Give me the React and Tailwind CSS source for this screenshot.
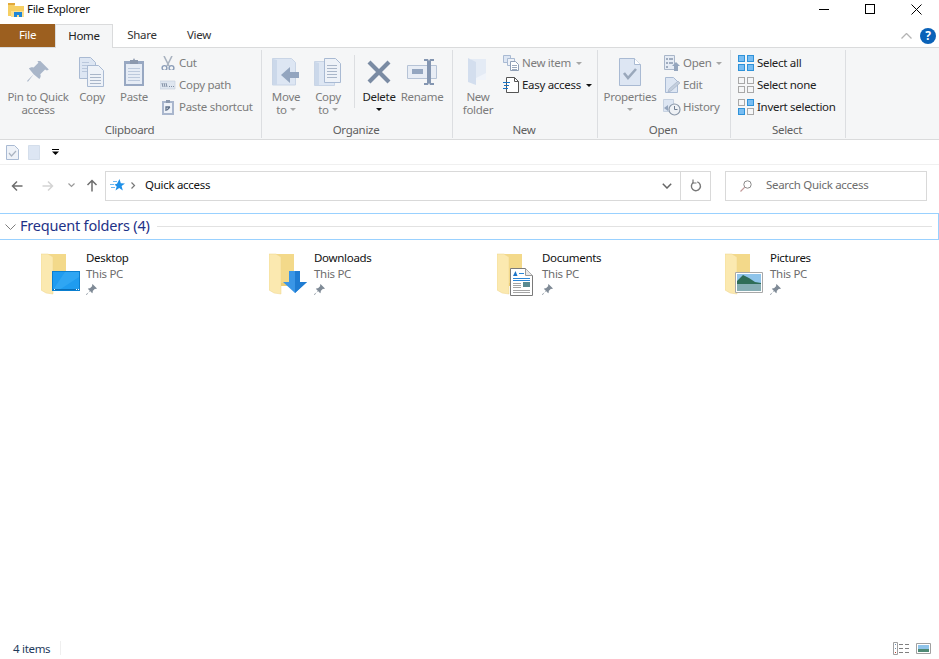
import React from "react"

const FOLDERS = [
  { name: "Desktop", overlay: "desktop" },
  { name: "Downloads", overlay: "downloads" },
  { name: "Documents", overlay: "documents" },
  { name: "Pictures", overlay: "pictures" },
]

const EDGE = "#a9bad3"
const PALE = "#dde6f3"

function Svg({ w, h = w, children, className = "" }) {
  return (
    <svg width={w} height={h} viewBox={`0 0 ${w} ${h}`} className={`block shrink-0 ${className}`}>
      {children}
    </svg>
  )
}

// thin horizontal rules inside icons, kept on whole pixels
function Rule({ d, color }) {
  return <path d={d} stroke={color} fill="none" shapeRendering="crispEdges" />
}

function AppIcon() {
  return (
    <Svg w={16} h={14}>
      <path d="M0 1h6l1 2h9v10H0z" fill="#f6cf63" />
      <path d="M0 0h7v2H0z" fill="#e2a93b" />
      <path d="M3 8h13v6H3z" fill="#fbe08f" />
      <path d="M6 9h8v5h-3v-2H9v2H6z" fill="#1f86d8" />
    </Svg>
  )
}

function WindowControls() {
  return (
    <div className="flex items-center ml-auto">
      <div className="w-[46px] h-[20px] flex items-center justify-center">
        <div className="w-[10px] h-px bg-black" />
      </div>
      <div className="w-[46px] h-[20px] flex items-center justify-center">
        <div className="w-[10px] h-[10px] border border-black" />
      </div>
      <div className="w-[46px] h-[20px] flex items-center justify-center">
        <Svg w={11}>
          <path d="M.5.5l10 10M10.5.5l-10 10" stroke="#000" strokeWidth="1" />
        </Svg>
      </div>
    </div>
  )
}

function PinIcon() {
  return (
    <Svg w={24}>
      <path d="M14 1l9 9-2 1-2-1-5 5c1 2 0 4-1 5L7 15l-6 8-1-1 7-7-5-6c1-1 3-2 5-1l5-5-1-2z" fill="#a9b6c9" transform="translate(1 0) scale(.95)" />
    </Svg>
  )
}

function CopyIcon() {
  return (
    <Svg w={26} h={30}>
      <path d="M.5.5h11l5 5v16H.5z" fill={PALE} stroke={EDGE} />
      <Rule d="M3 5h7M3 8h10M3 11h10M3 14h10" color="#b9c7dc" />
      <path d="M8.500 8.500h11l5 5v16h-16z" fill="#eef2f8" stroke={EDGE} />
      <Rule d="M11 17h11M11 20h11M11 23h11M11 26h11" color="#a9b6c9" />
    </Svg>
  )
}

function PasteIcon() {
  return (
    <Svg w={22} h={28}>
      <path d="M1 3h20v25H1z" fill="#98a8c2" />
      <path d="M3 6h16v20H3z" fill="#e6ecf5" />
      <Rule d="M5 10h12M5 13h12M5 16h12M5 19h12M5 22h12" color="#bcc9dc" />
      <path d="M7 2h3l1-2 1 2h3v4H7z" fill="#8c99ae" />
    </Svg>
  )
}

function ScissorsIcon() {
  return (
    <Svg w={14}>
      <path d="M3 0l5 10M11 0L6 10" stroke="#a9b3c0" strokeWidth="1.6" fill="none" />
      <circle cx="3.500" cy="12" r="2.400" fill="none" stroke="#8b9db8" strokeWidth="1.4" />
      <circle cx="10.500" cy="12" r="2.400" fill="none" stroke="#8b9db8" strokeWidth="1.4" />
    </Svg>
  )
}

function CopyPathIcon() {
  return (
    <Svg w={16} h={10}>
      <path d="M0 1h15v8H0z" fill="#dfe6f0" stroke="#c2cddb" strokeWidth=".6" />
      <path d="M2 3l1 4M4 3l1 4M6 3l1 4M9 6.500h1M11 6.500h1M13 6.500h1" stroke="#7f8da3" />
    </Svg>
  )
}

function PasteShortcutIcon() {
  return (
    <Svg w={14} h={16}>
      <path d="M1 2h12v14H1z" fill="#a9b6cd" />
      <path d="M3 4h8v10H3z" fill="#eef2f8" />
      <path d="M5 1h4v3H5z" fill="#8c99ae" />
      <path d="M5 12V8h4M6 11l3-3" stroke="#5e6f88" strokeWidth="1.3" fill="none" />
    </Svg>
  )
}

function MoveToIcon() {
  return (
    <Svg w={28}>
      <path d="M.5.5h19l4 4V27h-23z" fill={PALE} stroke="#c9d5e6" />
      <path d="M1 1l4 1v25H1z" fill="#cbd8ea" />
      <path d="M27 14H18V9l-9 8 9 8v-5h9z" fill="#93a5bf" />
    </Svg>
  )
}

function CopyToIcon() {
  return (
    <Svg w={28}>
      <path d="M.5 3.500h20v24H.5z" fill={PALE} stroke="#c9d5e6" />
      <path d="M1 4l4 1v22H1z" fill="#cbd8ea" />
      <path d="M10.500.5h11l5 5v19h-16z" fill="#eef2f8" stroke={EDGE} />
      <Rule d="M13 7h10M13 10h10M13 13h10M13 16h10M13 19h10" color="#a9b6c9" />
    </Svg>
  )
}

function DeleteIcon() {
  return (
    <Svg w={26}>
      <path d="M3 3l20 20M23 3L3 23" stroke="#7a8ba3" strokeWidth="4.200" />
    </Svg>
  )
}

function RenameIcon() {
  return (
    <Svg w={30} h={28}>
      <path d="M.5 7.500h29v13H.5z" fill="#e8edf5" stroke="#b6c3d6" />
      <path d="M5 11h11v5H5z" fill="#94a6c0" />
      <path d="M17 1h4l1 2 1-2h4v2h-3v22h3v2h-4l-1-2-1 2h-4v-2h3V3h-3z" fill="#8496b1" />
    </Svg>
  )
}

function NewFolderIcon() {
  return (
    <Svg w={20} h={28}>
      <path d="M3 1h15v21H3z" fill="#e4ebf5" />
      <path d="M0 0l8 4v23l-8-3z" fill="#d3deee" />
      <path d="M18 15v7H8v-2z" fill="#f0f4fa" />
    </Svg>
  )
}

function NewItemIcon() {
  return (
    <Svg w={16}>
      <path d="M.5.5h7v7h-7z" fill={PALE} stroke={EDGE} />
      <path d="M4.500 3.500h7v7h-7z" fill="#eef2f8" stroke={EDGE} />
      <path d="M7.500 6.500h5l3 3v6h-8z" fill="#fff" stroke="#8f9fb6" />
      <Rule d="M9 10h5M9 12h5M9 14h5" color="#9caabd" />
    </Svg>
  )
}

function EasyAccessIcon() {
  return (
    <Svg w={16}>
      <path d="M3.500.5h8l4 4v11h-12z" fill="#fff" stroke="#555" />
      <path d="M11.500.5v4h4" fill="none" stroke="#555" />
      <Rule d="M0 5h7M1 8h5M0 11h5" color="#1672c4" />
    </Svg>
  )
}

function PropertiesIcon() {
  return (
    <Svg w={22} h={28}>
      <path d="M.5.5h15l6 6v21H.5z" fill={PALE} stroke={EDGE} />
      <path d="M15.500.5v6h6" fill="#fff" stroke={EDGE} />
      <path d="M5 15l4 5 8-9" fill="none" stroke="#9aa8bb" strokeWidth="2.600" />
    </Svg>
  )
}

function OpenIcon() {
  return (
    <Svg w={16}>
      <path d="M.5.5h10v14H.5z" fill="#e6ecf5" stroke="#a9b6c9" />
      <path d="M2 3h2v2H2zM5 3h4v2H5zM2 7h2v2H2zM5 7h4v2H5zM2 11h2v2H2z" fill="#a0adc0" />
      <path d="M12 7l4 4h-2v5h-4v-5H8z" fill="#94a5bd" />
    </Svg>
  )
}

function EditIcon() {
  return (
    <Svg w={15} h={16}>
      <path d="M.5.5h8l4 4v11H.5z" fill={PALE} stroke={EDGE} />
      <path d="M13 4l2 2-9 8-3 1 1-3z" fill="#c3cedd" stroke="#9fadc1" strokeWidth=".6" />
    </Svg>
  )
}

function HistoryIcon() {
  return (
    <Svg w={18} h={17}>
      <path d="M.5.5h10v12H.5z" fill={PALE} stroke="#c7d2e1" />
      <circle cx="11.500" cy="10.500" r="5.500" fill="#eef1f5" stroke="#8b98a9" strokeWidth="1.200" />
      <path d="M11.500 7v3.500h3" stroke="#6f7d90" fill="none" />
      <path d="M1 9l4-3v6z" fill="#94a5bd" />
    </Svg>
  )
}

function SelectIcon({ filled }) {
  const cells = [
    [0, 0],
    [9, 0],
    [0, 9],
    [9, 9],
  ]
  return (
    <Svg w={16}>
      {cells.map(([x, y], i) => {
        const on = filled[i]
        return (
          <rect key={i} x={x + 0.5} y={y + 0.5} width="6" height="6"
            fill={on ? "#79bdf2" : "#f5f6f7"} stroke={on ? "#2e92d9" : "#a8a8a8"} />
        )
      })}
    </Svg>
  )
}

function Caret({ color = "#a7a7a7" }) {
  return <span className="inline-block w-0 h-0 border-x-[3px] border-x-transparent border-t-[3px]" style={{ borderTopColor: color }} />
}

function BigButton({ width, icon, lines, caret, active }) {
  return (
    <div className={`flex flex-col items-center shrink-0 pt-[8px] ${width}`}>
      <div className="h-[31px] flex items-center justify-center">{icon}</div>
      <div className={`mt-[3px] text-center leading-[13px] whitespace-nowrap ${active ? "text-[#222]" : "text-[#7c7c7c]"}`}>
        {lines.map((l, i) => (
          <div key={l} className="h-[13px] flex items-center justify-center gap-[3px]">
            {l}
            {caret && i === lines.length - 1 && lines.length > 1 && <Caret />}
          </div>
        ))}
        {caret && lines.length === 1 && (
          <div className="h-[13px] flex items-center justify-center">
            <Caret color={active ? "#111" : "#a7a7a7"} />
          </div>
        )}
      </div>
    </div>
  )
}

function SmallButton({ icon, label, caret, active }) {
  return (
    <div className={`h-[22px] flex items-center whitespace-nowrap ${active ? "text-[#222]" : "text-[#7c7c7c]"}`}>
      <div className="flex justify-center w-[16px]">{icon}</div>
      <span className="ml-[3px]">{label}</span>
      {caret && (
        <span className="ml-[5px] flex items-center">
          <Caret color={active ? "#111" : "#a7a7a7"} />
        </span>
      )}
    </div>
  )
}

function RibbonGroup({ width, label, children }) {
  return (
    <div className={`flex flex-col shrink-0 border-r border-[#dcdee1] mb-[1px] mt-[2px] ${width}`}>
      <div className="flex h-[73px] mt-[-2px]">{children}</div>
      <div className="h-[14px] mt-[2px] pr-[2px] flex items-center justify-center text-[#5f5f5f] whitespace-nowrap">{label}</div>
    </div>
  )
}

function Ribbon() {
  return (
    <div className="flex h-[93px] bg-[#f5f6f7] border-y border-[#dadbdc] shrink-0">
      <RibbonGroup width="w-[262px]" label="Clipboard">
        <BigButton width="w-[76px]" icon={<PinIcon />} lines={["Pin to Quick", "access"]} />
        <BigButton width="w-[32px]" icon={<CopyIcon />} lines={["Copy"]} />
        <BigButton width="w-[52px]" icon={<PasteIcon />} lines={["Paste"]} />
        <div className="pt-[4px]">
          <SmallButton icon={<ScissorsIcon />} label="Cut" />
          <SmallButton icon={<CopyPathIcon />} label="Copy path" />
          <SmallButton icon={<PasteShortcutIcon />} label="Paste shortcut" />
        </div>
      </RibbonGroup>

      <RibbonGroup width="w-[191px]" label="Organize">
        <BigButton width="w-[48px]" icon={<MoveToIcon />} lines={["Move", "to"]} caret />
        <BigButton width="w-[36px]" icon={<CopyToIcon />} lines={["Copy", "to"]} caret />
        <div className="w-px h-[53px] mt-[7px] ml-[8px] bg-[#dcdee1]" />
        <BigButton width="w-[48px]" icon={<DeleteIcon />} lines={["Delete"]} caret active />
        <BigButton width="w-[38px]" icon={<RenameIcon />} lines={["Rename"]} />
      </RibbonGroup>

      <RibbonGroup width="w-[145px]" label="New">
        <BigButton width="w-[50px]" icon={<NewFolderIcon />} lines={["New", "folder"]} />
        <div className="pt-[4px]">
          <SmallButton icon={<NewItemIcon />} label="New item" caret />
          <SmallButton icon={<EasyAccessIcon />} label="Easy access" caret active />
        </div>
      </RibbonGroup>

      <RibbonGroup width="w-[133px]" label="Open">
        <BigButton width="w-[64px]" icon={<PropertiesIcon />} lines={["Properties"]} caret />
        <div className="pt-[4px] ml-[2px]">
          <SmallButton icon={<OpenIcon />} label="Open" caret />
          <SmallButton icon={<EditIcon />} label="Edit" />
          <SmallButton icon={<HistoryIcon />} label="History" />
        </div>
      </RibbonGroup>

      <RibbonGroup width="w-[115px]" label="Select">
        <div className="pt-[4px] pl-[7px]">
          <SmallButton active icon={<SelectIcon filled={[1, 1, 1, 1]} />} label="Select all" />
          <SmallButton active icon={<SelectIcon filled={[0, 0, 0, 0]} />} label="Select none" />
          <SmallButton active icon={<SelectIcon filled={[0, 1, 1, 0]} />} label="Invert selection" />
        </div>
      </RibbonGroup>
    </div>
  )
}

function TabRow() {
  return (
    <div className="flex items-start h-[23px] shrink-0">
      <div className="w-[55px] h-[23px] bg-[#9c5f1f] text-white flex items-center justify-center pb-[1px]">File</div>
      <div className="w-[58px] h-[24px] bg-[#f5f6f7] border-x border-t border-[#dadbdc] flex items-center justify-center text-[#222] relative z-10 pb-[2px]">
        Home
      </div>
      <div className="w-[58px] h-[23px] flex items-center justify-center text-[#333] pb-[1px]">Share</div>
      <div className="w-[56px] h-[23px] flex items-center justify-center text-[#333] pb-[1px]">View</div>
      <div className="ml-auto h-[23px] flex items-center pr-[3px] gap-[8px]">
        <Svg w={11} h={6}>
          <path d="M.5 5.500l5-5 5 5" stroke="#b4b4b4" fill="none" strokeWidth="1.300" />
        </Svg>
        <div className="w-[16px] h-[16px] rounded-full bg-[#0a62b8] text-white font-bold text-[12px] leading-[16px] text-center">?</div>
      </div>
    </div>
  )
}

function QuickToolbar() {
  return (
    <div className="flex items-center h-[25px] shrink-0 border-b border-[#f0f0f0] pl-[6px]">
      <Svg w={13} h={15}>
        <path d="M.5.5h8l4 4v10H.5z" fill="#eef2f8" stroke={EDGE} />
        <path d="M3 8l2.500 3L10 6" stroke="#a9b3c0" fill="none" strokeWidth="1.200" />
      </Svg>
      <Svg w={13} h={15} className="ml-[9px]">
        <path d="M.5.5h11v14H.5z" fill={PALE} stroke="#d4deeb" />
      </Svg>
      <Svg w={7} h={6} className="ml-[11px]">
        <path d="M0 0h7v1H0z" fill="#000" />
        <path d="M0 2.500h7L3.500 6z" fill="#000" />
      </Svg>
    </div>
  )
}

function NavRow() {
  return (
    <div className="flex items-center h-[41px] shrink-0">
      <div className="w-[105px] flex items-center shrink-0 pl-[11px]">
        <Svg w={12} h={12}>
          <path d="M11.500 6H1.500M6 1.500L1.500 6 6 10.500" stroke="#6e6e6e" fill="none" strokeWidth="1.500" />
        </Svg>
        <Svg w={12} h={12} className="ml-[19px]">
          <path d="M.5 6h10M6 1.500L10.500 6 6 10.500" stroke="#d4d4d4" fill="none" strokeWidth="1.500" />
        </Svg>
        <Svg w={7} h={5} className="ml-[14px]">
          <path d="M.5.5l3 3 3-3" stroke="#9a9a9a" fill="none" strokeWidth="1.200" />
        </Svg>
        <Svg w={12} h={13} className="ml-[11px]">
          <path d="M6 12.500V1.500M1.500 6L6 1.500 10.500 6" stroke="#6e6e6e" fill="none" strokeWidth="1.500" />
        </Svg>
      </div>
      <div className="flex items-center h-[30px] w-[606px] border border-[#d9d9d9] shrink-0">
        <Svg w={15} h={14} className="ml-[4px]">
          <path d="M9.500 0l1.300 4.200 4.200.2-3.400 2.700 1.200 4.400-3.600-2.500L5.500 11.500l1.200-4.100-2.200-2 2.500-.6z" fill="#1e90e8" />
          <path d="M0 5.500h4M1 8.500h4M3 2.500h4" stroke="#6cb9f2" />
        </Svg>
        <Svg w={5} h={7} className="ml-[6px]">
          <path d="M.5.5l3 3-3 3" stroke="#777" fill="none" strokeWidth="1.200" />
        </Svg>
        <span className="ml-[9px] mb-[2px] text-[#111]">Quick access</span>
        <div className="ml-auto h-full flex items-center">
          <Svg w={10} h={6} className="mr-[8px]">
            <path d="M.8.8L5 5l4.200-4.200" stroke="#666" fill="none" strokeWidth="1.500" />
          </Svg>
          <div className="w-[30px] h-full border-l border-[#d9d9d9] flex items-center justify-center">
            <Svg w={12} h={13}>
              <path d="M3.300 3.500a4.500 4.500 0 1 0 4-.6" stroke="#777" fill="none" strokeWidth="1.400" />
              <path d="M3 .5v3.500h3.500" stroke="#777" fill="none" strokeWidth="1.200" />
            </Svg>
          </div>
        </div>
      </div>
      <div className="ml-[14px] flex items-center h-[30px] w-[202px] border border-[#d9d9d9] shrink-0 pl-[14px] text-[#6d6d6d]">
        <Svg w={12} h={12}>
          <circle cx="7.500" cy="4.500" r="3.700" fill="none" stroke="#8a8a8a" />
          <path d="M4.800 7.200L.5 11.500" stroke="#c39a9a" strokeWidth="1.200" />
        </Svg>
        <span className="ml-[14px] mb-[2px]">Search Quick access</span>
      </div>
    </div>
  )
}

function FolderOverlay({ kind }) {
  if (kind === "desktop") {
    return (
      <g>
        <path d="M11 18h28v20H11z" fill="#0a7fd0" />
        <path d="M12 19h26v18H12z" fill="#1f9cf0" />
        <path d="M24 19h14v5l-20 13h-6z" fill="#3aaef5" opacity=".6" />
        <Rule d="M12 36h26" color="#0b6fb8" />
        <Rule d="M13 36h1M35 36h1M37 36h1" color="#fff" />
      </g>
    )
  }
  if (kind === "downloads") {
    return (
      <g>
        <path d="M20 18h11v11h7L26 40 14 29h6z" fill="#3a96e6" />
        <path d="M26 18h5v11h7L26 40z" fill="#1f7cd2" />
      </g>
    )
  }
  if (kind === "documents") {
    return (
      <g>
        <path d="M13.500 15.500h15l7 7v20h-22z" fill="#fff" stroke="#7a7a7a" />
        <path d="M28.500 15.500v7h7" fill="#e8e8e8" stroke="#9a9a9a" />
        <path d="M16 23l2.500-5 2 5z" fill="#1b74c8" />
        <Rule d="M22 20h5M16 25h17M16 27h17" color="#2b86d6" />
        <path d="M26 29h7v5h-7z" fill="#5a8a90" />
        <Rule d="M16 30h8M16 32h8M16 34h8M16 37h17M16 39h17" color="#a4a4a4" />
      </g>
    )
  }
  return (
    <g>
      <path d="M10.500 19.500h27v20h-27z" fill="#fff" stroke="#a8a8a8" />
      <path d="M12 21h24v10H12z" fill="#8fc4ea" />
      <path d="M12 28l6-6 6 3 6 4 6 1v3H12z" fill="#2f6d57" />
      <path d="M12 31h24v7H12z" fill="#86aeb4" />
    </g>
  )
}

function FolderTile({ name, overlay }) {
  return (
    <div className="flex items-start">
      <Svg w={40} h={44} className="shrink-0 mt-[3px]">
        <path d="M3 1h22v29H3z" fill="#f3d98a" />
        <path d="M0 1h7l5 3v37L5 40 0 37z" fill="#fbe9b0" stroke="#efd48a" strokeWidth=".5" />
        <path d="M12 30h13v3H12z" fill="#eccd75" />
        <FolderOverlay kind={overlay} />
      </Svg>
      <div className="ml-[5px] leading-[15.500px]">
        <div className="text-[#111]">{name}</div>
        <div className="text-[#6d6d6d]">This PC</div>
        <div className="h-[16px] flex items-center">
          <Svg w={11} h={11}>
            <path d="M6.500 0L11 4.500l-1.200.5-.8-.3-2.300 2.300c.3 1 0 1.700-.5 2.200L3.800 6.800.7 11 0 10.300l4.200-3.100L1.800 4.800c.5-.5 1.200-.8 2.200-.5L6.300 2 6 1.200z" fill="#7f8a96" />
          </Svg>
        </div>
      </div>
    </div>
  )
}

function StatusBar() {
  return (
    <div className="mt-auto h-[22px] flex items-center shrink-0 pl-[13px] text-[#1e395b]">
      <span className="pt-[2px]">4 items</span>
      <div className="w-px h-[14px] bg-[#efefef] ml-[10px]" />
      <div className="ml-auto flex items-center gap-[6px] pr-[8px]">
        <Svg w={17} h={13}>
          <path d="M.5.5h4v12h-4z" fill="#fff" stroke="#a0a0a0" />
          <path d="M2 2h1v1H2zM2 6h1v1H2z" fill="#6f8fb0" />
          <path d="M2 10h1v1H2z" fill="#c0392b" />
          <path d="M6 2.500h4M12 2.500h4M6 6.500h4M12 6.500h4M6 10.500h4M12 10.500h4" stroke="#808080" />
        </Svg>
        <Svg w={15} h={11}>
          <path d="M.5.5h14v10H.5z" fill="#fff" stroke="#a0a0a0" />
          <path d="M2 2h11v4H2z" fill="#8fc4ea" />
          <path d="M2 6h11v3H2z" fill="#4f8a75" />
        </Svg>
      </div>
    </div>
  )
}

function App() {
  return (
    <div className="h-screen w-full flex flex-col bg-white overflow-hidden text-[11.500px] font-['Noto_Sans','Open_Sans',sans-serif] tracking-[-0.3px]">
      <div className="flex items-center h-[24px] shrink-0 pb-[6px]">
        <div className="ml-[8px] mt-[1px]">
          <AppIcon />
        </div>
        <span className="ml-[3px] text-[#111]">File Explorer</span>
        <WindowControls />
      </div>

      <TabRow />
      <Ribbon />
      <QuickToolbar />
      <NavRow />

      <div className="mt-[7px] h-[27px] flex items-center shrink-0 border-y border-r border-[#99d1ff]">
        <Svg w={11} h={6} className="ml-[5px]">
          <path d="M.5.5l5 5 5-5" stroke="#7d7d7d" fill="none" />
        </Svg>
        <span className="ml-[4px] mb-[2px] text-[14.500px] tracking-[-0.2px] text-[#1e3287]">Frequent folders (4)</span>
        <div className="flex-1 h-px bg-[#e2e2e2] ml-[7px] mr-[6px]" />
      </div>

      <div className="grid grid-cols-[228px_228px_228px_228px] pl-[41px] pt-[10px]">
        {FOLDERS.map((f) => (
          <FolderTile key={f.name} name={f.name} overlay={f.overlay} />
        ))}
      </div>

      <StatusBar />
    </div>
  )
}

export default App
